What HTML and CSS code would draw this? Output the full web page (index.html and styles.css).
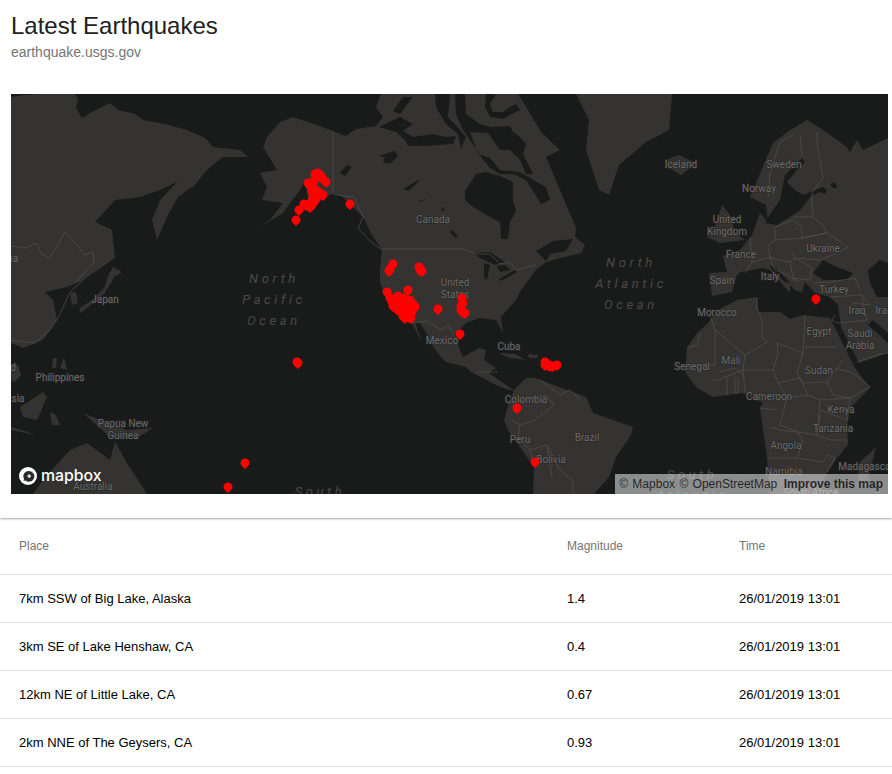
FILE: index.html
```html
<!DOCTYPE html>
<html lang="en">
<head>
    <meta charset="UTF-8">
    <meta name="viewport" content="width=device-width, initial-scale=1.0">
    <title>Latest Earthquakes</title>
    <link rel="stylesheet" href="styles.css">
</head>
<body>
    <header class="top">
        <h1>Latest Earthquakes</h1>
        <p class="source">earthquake.usgs.gov</p>
        <div class="map">
            <svg class="map-canvas" viewBox="11 94 877 400" width="877" height="400">
                <defs>
                    <path id="pin" d="M0 6C-1.2 4.5-4.5 2.8-4.5 0A4.5 4.5 0 1 1 4.5 0C4.5 2.8 1.2 4.5 0 6Z"/>
                </defs>
                <rect class="water" x="11" y="94" width="877" height="400"/>

                <!-- land -->
                <g class="land">
                    <path d="M11 97L24 95 40 94 75 94 78 100 76 108 82 118 92 112 110 103 118 110 135 114 143 120 165 124 187 130 205 138 213 147 240 150 248 157 223 157 215 163 205 172 195 185 178 197 168 215 157 240 152 220 160 200 177 182 160 190 140 197 115 200 95 222 112 230 115 258 105 265 83 280 67 287 45 292 53 300 57 320 50 330 43 340 23 348 11 343Z"/>
                    <path d="M70 293L76 292 78 303 72 305Z"/>
                    <path d="M113 267L122 272 114 277 111 283 104 294 92 304 80 313 80 308 92 300 104 288 108 276Z"/>
                    <path d="M11 363L18 365 21 375 15 382 11 381Z"/>
                    <path d="M20 407L43 392 47 397 37 420 23 417Z"/>
                    <path d="M11 427L28 432 35 435 11 430Z"/>
                    <path d="M50 412L55 414 60 425 52 425Z"/>
                    <path d="M64 357L67 370 60 368Z"/>
                    <path d="M53 358L57 358 56 368 52 368Z"/>
                    <path d="M83 413L100 420 127 430 153 428 137 438 110 437 100 428Z"/>
                    <path d="M33 494L43 480 70 450 87 443 110 460 115 442 127 463 147 494Z"/>
                    <path d="M381 94L376 107 383 117 376 126 356 129 346 136 333 131 317 125 293 117 280 122 267 137 263 147 277 170 260 173 267 187 262 200 283 203 270 220 255 230 283 213 300 190 305 180 308 200 317 203 333 193 343 197 363 217 372 235 382 250 380 270 380 283 387 300 397 315 412 323 422 343 415 322 430 342 440 356 446 362 466 367 471 372 496 385 509 390 514 390 509 387 499 380 489 373 496 368 484 360 486 350 479 348 463 357 458 345 454 335 466 323 479 318 496 320 503 333 501 317 516 300 521 290 536 270 546 262 560 258 581 253 585 245 575 237 576 228 560 190 546 157 560 150 541 132 528 110 518 94Z"/>
                    <path d="M576 94L672 94 669 130 646 142 619 165 609 195 599 190 586 150 589 120Z"/>
                    <path d="M666 160L679 155 696 163 681 175 669 168Z"/>
                    <path d="M722 205L730 215 735 232 745 240 720 243 707 237 716 225Z"/>
                    <path d="M750 197L773 143 790 130 807 120 823 130 847 147 851 155 840 167 848 155 857 140 863 150 888 138 888 353 859 363 841 327 838 305 830 297 815 293 805 282 802 292 795 290 790 285 790 293 783 285 770 270 762 268 753 270 740 272 737 275 732 292 712 296 709 273 727 272 723 256 740 250 752 235 760 213 768 222 766 205Z"/>
                    <path d="M687 348L697 333 708 323 718 310 737 300 757 297 758 312 780 312 790 319 803 315 830 318 837 332 855 368 870 388 850 408 847 428 848 445 837 458 827 473 817 494 770 494 767 458 760 408 763 403 742 393 713 397 697 388 685 372Z"/>
                    <path d="M876 447L866 487 858 480 859 463Z"/>
                    <path d="M514 390L526 378 536 378 559 387 586 397 593 413 633 427 631 435 616 457 609 477 594 494 533 494 534 467 508 430 504 420 509 403Z"/>
                    <path d="M498 353L515 354 526 360 510 358Z"/>
                    <path d="M528 354L538 355 537 358 529 358Z"/>
                </g>

                <!-- lakes, bays and inland seas -->
                <g class="water">
                    <path d="M465 191L476 174 486 172 500 176 513 182 513 201 516 211 510 222 508 239 501 239 500 222 490 217 473 207 465 200Z"/>
                    <path d="M379 127L400 117 413 124 403 131 413 137 433 134 446 137 456 136 453 144 423 146 408 146 406 141 396 132Z"/>
                    <path d="M403 97L413 97 400 114 393 111Z"/>
                    <path d="M435 94L450 94 448 117 461 131 466 137 461 149 458 134 446 124 436 107Z"/>
                    <path d="M455 94L465 94 466 114 480 124 490 127 510 126 513 132 520 137 526 144 523 154 533 174 526 174 520 160 510 150 500 150 488 133 470 132 478 154 490 158 500 170 520 172 535 181 546 187 550 200 541 204 535 194 526 180 513 174 500 174 490 168 482 158 470 140 462 128 456 114Z"/>
                    <path d="M486 94L496 94 490 104 493 112 503 112 510 107 516 104 520 110 503 119 490 117 485 107Z"/>
                    <path d="M378 156L395 151 398 156 390 164 383 162 385 157Z"/>
                    <path d="M403 189L420 179 416 184 408 191Z"/>
                    <path d="M419 201L426 199 420 202Z"/>
                    <path d="M441 209L445 207 443 212Z"/>
                    <path d="M451 229L458 236 455 238 450 232Z"/>
                    <path d="M536 251L553 241 573 239 566 251 550 254 546 261Z"/>
                    <path d="M473 253L490 252 505 262 495 265 480 258Z"/>
                    <path d="M484 263L490 265 487 280 484 278Z"/>
                    <path d="M497 266L505 265 510 270 500 272Z"/>
                    <path d="M499 279L515 270 517 272 501 281Z"/>
                    <path d="M787 182L797 170 805 162 802 158 785 175 780 200 768 217 765 223 777 225 790 217 800 210 812 195 827 190 823 187 803 195 795 190Z"/>
                    <path d="M820 188L827 190 825 194 821 192Z"/>
                    <path d="M830 184L835 182 837 188 833 188Z"/>
                    <path d="M813 273L823 260 837 267 853 273 847 280 823 280Z"/>
                    <path d="M868 270L880 260 888 263 888 297 877 297 870 283Z"/>
                    <path d="M873 320L888 333 888 343 868 325Z"/>
                    <path d="M770 265L778 270 790 283 785 282 772 270Z"/>
                    <path d="M340 173L347 165 352 167 345 176Z"/>
                    <path d="M415 322L420 323 432 342 428 342Z"/>
                </g>

                <!-- borders -->
                <g class="borders">
                    <path d="M333 131L333 194 343 196 354 197 363 217 358 228 370 241 381 249 463 249 476 254 490 254 500 264 510 262 516 270 536 265"/>
                    <path d="M412 323L428 321 440 330 448 326 456 338 458 345"/>
                    <path d="M11 340L35 343 50 330 58 318 70 292 83 280"/>
                    <path d="M11 246L26 248 37 243 41 254 50 258 65 232 78 246 84 255 93 252 94 262 76 282"/>
                    <path d="M793 135L780 142 770 173 768 197 M800 135L802 157 M817 132L817 143 823 178 812 193 812 200 813 217"/>
                    <path d="M775 227L775 240 802 238 802 227 793 220 775 227 M793 217L812 217 823 225 827 233 802 238 M802 238L827 233 848 247 837 253 820 260 795 258 792 253 M775 240L768 245 770 258 790 262 795 258 M750 238L752 262 772 257 M752 262L745 273 M770 258L775 270 788 275 796 282 M790 262L793 278 810 280 812 268 795 258 M793 278L800 282 M815 283L830 282 855 278 860 290 M830 297L862 295 870 305 852 303"/>
                    <path d="M757 298L757 308 762 320 762 338 768 342 745 355 715 330 710 315 M715 330L715 365 687 365 M700 333L697 345 687 348 M745 355L743 370 718 380 713 380 M777 343L778 355 773 370 743 370 M777 343L803 353 805 315 M805 347L837 347 M803 353L797 373 803 383 827 382 843 360 M835 368L853 373 870 387 850 398 833 395 827 382 M778 383L800 378 808 395 787 398 778 383 M787 398L780 425 798 432 817 435 820 400 808 395 M820 400L850 398 847 420 820 410 M820 415L817 435 830 440 848 440 M770 427L780 430 798 432 803 442 797 458 768 458 M797 458L823 462 828 455 835 458 827 472 M760 408L777 410 M720 372L735 368 743 375 M727 378L727 395 M735 378L735 393 738 393 738 378 M743 370L745 392 M773 370L778 383"/>
                    <path d="M835 315L832 320 837 323 850 322 867 320 862 298 M857 362L880 354 888 353"/>
                    <path d="M540 380L560 395 570 390 580 400 M509 403L524 400 546 395 554 405 535 420 520 425 518 437 530 450 547 445 560 470 572 480 574 494 M530 450L536 467 M547 445L552 477 M512 420L520 425 M498 372L478 372"/>
                </g>

                <!-- labels -->
                <g class="labels">
                    <text x="13" y="262">lia</text>
                    <text x="13" y="371">d</text>
                    <text x="18" y="402">sia</text>
                    <text x="105" y="303">Japan</text>
                    <text x="60" y="381">Philippines</text>
                    <text x="123" y="427">Papua New</text>
                    <text x="123" y="439">Guinea</text>
                    <text x="93" y="490">Australia</text>
                    <text x="433" y="223">Canada</text>
                    <text x="455" y="286">United</text>
                    <text x="455" y="298">States</text>
                    <text x="442" y="344">Mexico</text>
                    <text x="509" y="350">Cuba</text>
                    <text x="526" y="403">Colombia</text>
                    <text x="520" y="443">Peru</text>
                    <text x="587" y="441">Brazil</text>
                    <text x="551" y="463">Bolivia</text>
                    <text x="681" y="168">Iceland</text>
                    <text x="784" y="168">Sweden</text>
                    <text x="759" y="192">Norway</text>
                    <text x="727" y="223">United</text>
                    <text x="727" y="235">Kingdom</text>
                    <text x="741" y="258">France</text>
                    <text x="823" y="252">Ukraine</text>
                    <text x="770" y="280">Italy</text>
                    <text x="722" y="284">Spain</text>
                    <text x="834" y="293">Turkey</text>
                    <text x="717" y="316">Morocco</text>
                    <text x="857" y="314">Iraq</text>
                    <text x="884" y="314">Iran</text>
                    <text x="819" y="335">Egypt</text>
                    <text x="860" y="337">Saudi</text>
                    <text x="860" y="349">Arabia</text>
                    <text x="692" y="370">Senegal</text>
                    <text x="731" y="364">Mali</text>
                    <text x="819" y="374">Sudan</text>
                    <text x="769" y="400">Cameroon</text>
                    <text x="841" y="413">Kenya</text>
                    <text x="833" y="432">Tanzania</text>
                    <text x="786" y="449">Angola</text>
                    <text x="784" y="475">Namibia</text>
                    <text x="866" y="470">Madagascar</text>
                    <text x="811" y="496">South Africa</text>
                </g>
                <g class="oceans">
                    <text x="274" y="283">North</text>
                    <text x="274" y="304">Pacific</text>
                    <text x="274" y="325">Ocean</text>
                    <text x="631" y="267">North</text>
                    <text x="631" y="288">Atlantic</text>
                    <text x="631" y="309">Ocean</text>
                    <text x="320" y="496">South</text>
                    <text x="692" y="479">South</text>
                    <text x="692" y="500">Atlantic</text>
                </g>

                <!-- earthquakes -->
                <g class="pins">
                    <use href="#pin" x="315" y="174"/><use href="#pin" x="318" y="173"/><use href="#pin" x="320" y="175"/>
                    <use href="#pin" x="322" y="178"/><use href="#pin" x="316" y="177"/><use href="#pin" x="326" y="182"/>
                    <use href="#pin" x="308" y="183"/><use href="#pin" x="312" y="184"/><use href="#pin" x="310" y="185"/>
                    <use href="#pin" x="314" y="181"/><use href="#pin" x="316" y="190"/><use href="#pin" x="312" y="191"/>
                    <use href="#pin" x="319" y="192"/><use href="#pin" x="323" y="195"/><use href="#pin" x="313" y="195"/>
                    <use href="#pin" x="317" y="197"/><use href="#pin" x="312" y="200"/><use href="#pin" x="315" y="201"/>
                    <use href="#pin" x="306" y="205"/><use href="#pin" x="304" y="204"/><use href="#pin" x="310" y="207"/>
                    <use href="#pin" x="312" y="205"/><use href="#pin" x="299" y="210"/><use href="#pin" x="296" y="220"/>
                    <use href="#pin" x="350" y="204"/>

                    <use href="#pin" x="393" y="264"/><use href="#pin" x="390" y="269"/><use href="#pin" x="389" y="271"/>
                    <use href="#pin" x="419" y="267"/><use href="#pin" x="422" y="271"/><use href="#pin" x="420" y="270"/>
                    <use href="#pin" x="408" y="290"/><use href="#pin" x="387" y="292"/><use href="#pin" x="390" y="298"/>
                    <use href="#pin" x="392" y="302"/><use href="#pin" x="398" y="296"/><use href="#pin" x="404" y="298"/>
                    <use href="#pin" x="410" y="300"/><use href="#pin" x="396" y="305"/><use href="#pin" x="402" y="304"/>
                    <use href="#pin" x="408" y="306"/><use href="#pin" x="413" y="304"/><use href="#pin" x="400" y="311"/>
                    <use href="#pin" x="406" y="312"/><use href="#pin" x="403" y="316"/><use href="#pin" x="409" y="317"/>
                    <use href="#pin" x="411" y="318"/><use href="#pin" x="395" y="300"/><use href="#pin" x="401" y="299"/>
                    <use href="#pin" x="407" y="302"/><use href="#pin" x="397" y="309"/><use href="#pin" x="412" y="312"/>
                    <use href="#pin" x="405" y="318"/><use href="#pin" x="415" y="307"/><use href="#pin" x="393" y="306"/>
                    <use href="#pin" x="438" y="309"/>

                    <use href="#pin" x="462" y="298"/><use href="#pin" x="461" y="306"/><use href="#pin" x="461" y="310"/>
                    <use href="#pin" x="463" y="303"/><use href="#pin" x="463" y="312"/><use href="#pin" x="465" y="313"/>
                    <use href="#pin" x="460" y="334"/>

                    <use href="#pin" x="545" y="362"/><use href="#pin" x="545" y="365"/><use href="#pin" x="547" y="364"/>
                    <use href="#pin" x="549" y="365"/><use href="#pin" x="550" y="366"/><use href="#pin" x="553" y="366"/>
                    <use href="#pin" x="557" y="365"/><use href="#pin" x="517" y="408"/><use href="#pin" x="535" y="462"/>
                    <use href="#pin" x="816" y="299"/><use href="#pin" x="297" y="362"/><use href="#pin" x="298" y="363"/>
                    <use href="#pin" x="245" y="463"/><use href="#pin" x="228" y="487"/>
                </g>
            </svg>

            <div class="logo">
                <svg class="logo-mark" viewBox="0 0 18 18" width="18" height="18">
                    <circle cx="9" cy="9" r="9" fill="#fff"/>
                    <path d="M10.2 3.9A5.4 5.4 0 1 1 6.2 13.2L4.6 14.4 5 11.8A5.4 5.4 0 0 1 10.2 3.9Z" fill="#2b2b2b"/>
                    <path d="M10.2 7.3V11M8.35 9.15H12.05" stroke="#fff" stroke-width="1.3"/>
                </svg>
                <span class="logo-text">mapbox</span>
            </div>
            <div class="attribution">
                <a href="#">© Mapbox</a> <a href="#">© OpenStreetMap</a> <a href="#" class="improve">Improve this map</a>
            </div>
        </div>
    </header>

    <table class="quakes">
        <thead>
            <tr>
                <th>Place</th>
                <th>Magnitude</th>
                <th>Time</th>
            </tr>
        </thead>
        <tbody>
            <tr>
                <td>7km SSW of Big Lake, Alaska</td>
                <td>1.4</td>
                <td>26/01/2019 13:01</td>
            </tr>
            <tr>
                <td>3km SE of Lake Henshaw, CA</td>
                <td>0.4</td>
                <td>26/01/2019 13:01</td>
            </tr>
            <tr>
                <td>12km NE of Little Lake, CA</td>
                <td>0.67</td>
                <td>26/01/2019 13:01</td>
            </tr>
            <tr>
                <td>2km NNE of The Geysers, CA</td>
                <td>0.93</td>
                <td>26/01/2019 13:01</td>
            </tr>
        </tbody>
    </table>
</body>
</html>
```

FILE: styles.css
```css
html, body {
    margin: 0;
    padding: 0;
    background-color: #fff;
    overflow: hidden;
}
body {
    font-family: "Liberation Sans", Arial, sans-serif;
    color: #000;
}
.top {
    height: 518px;
    padding: 0 4px 0 11px;
    box-sizing: border-box;
    box-shadow: 0 1px 2px rgba(0, 0, 0, 0.35);
}
h1 {
    margin: 0;
    padding-top: 12px;
    font-size: 24px;
    font-weight: 400;
    line-height: 28px;
    color: #212121;
}
.source {
    margin: 4px 0 0;
    font-size: 14px;
    line-height: 16px;
    color: #757575;
}
.map {
    position: relative;
    width: 877px;
    height: 400px;
    margin-top: 34px;
    overflow: hidden;
}
.map-canvas {
    display: block;
}
rect.water, .water path {
    fill: #191a1a;
}
.land path {
    fill: #343332;
}
.borders path {
    fill: none;
    stroke: #525251;
    stroke-width: 0.7;
}
.labels text {
    font-family: Roboto, "Liberation Sans", sans-serif;
    font-size: 10px;
    text-anchor: middle;
    fill: #6a6a69;
    stroke: rgba(40, 40, 39, 0.7);
    stroke-width: 1.5px;
    paint-order: stroke;
}
.oceans text {
    font-family: Roboto, "Liberation Sans", sans-serif;
    font-size: 13px;
    font-style: italic;
    letter-spacing: 3.6px;
    text-anchor: middle;
    fill: #4a4a49;
}
.pins use {
    fill: #f00;
}
.logo {
    position: absolute;
    left: 8px;
    bottom: 9px;
    display: flex;
    align-items: center;
    gap: 4px;
}
.logo-mark {
    display: block;
}
.logo-text {
    font-family: Inter, sans-serif;
    font-size: 15.8px;
    font-weight: 500;
    line-height: 18px;
    color: #fff;
}
.attribution {
    position: absolute;
    right: 0;
    bottom: 0;
    height: 20px;
    padding: 0 5px 0 4px;
    line-height: 20px;
    font-size: 12px;
    word-spacing: 1px;
    white-space: nowrap;
    background-color: rgba(255, 255, 255, 0.5);
}
.attribution a {
    color: rgba(0, 0, 0, 0.75);
    text-decoration: none;
}
.attribution .improve {
    margin-left: 2px;
    font-weight: 700;
    word-spacing: 0;
}
.quakes {
    width: 892px;
    border-collapse: collapse;
    table-layout: fixed;
}
.quakes th, .quakes td {
    padding: 0 0 0 8px;
    text-align: left;
    border-bottom: 1px solid #e0e0e0;
}
.quakes th:first-child, .quakes td:first-child {
    width: 540px;
    padding-left: 19px;
}
.quakes th:nth-child(2), .quakes td:nth-child(2) {
    width: 164px;
}
.quakes th {
    height: 56px;
    font-size: 12px;
    font-weight: 400;
    color: #757575;
}
.quakes td {
    height: 47px;
    font-size: 13px;
}
```
